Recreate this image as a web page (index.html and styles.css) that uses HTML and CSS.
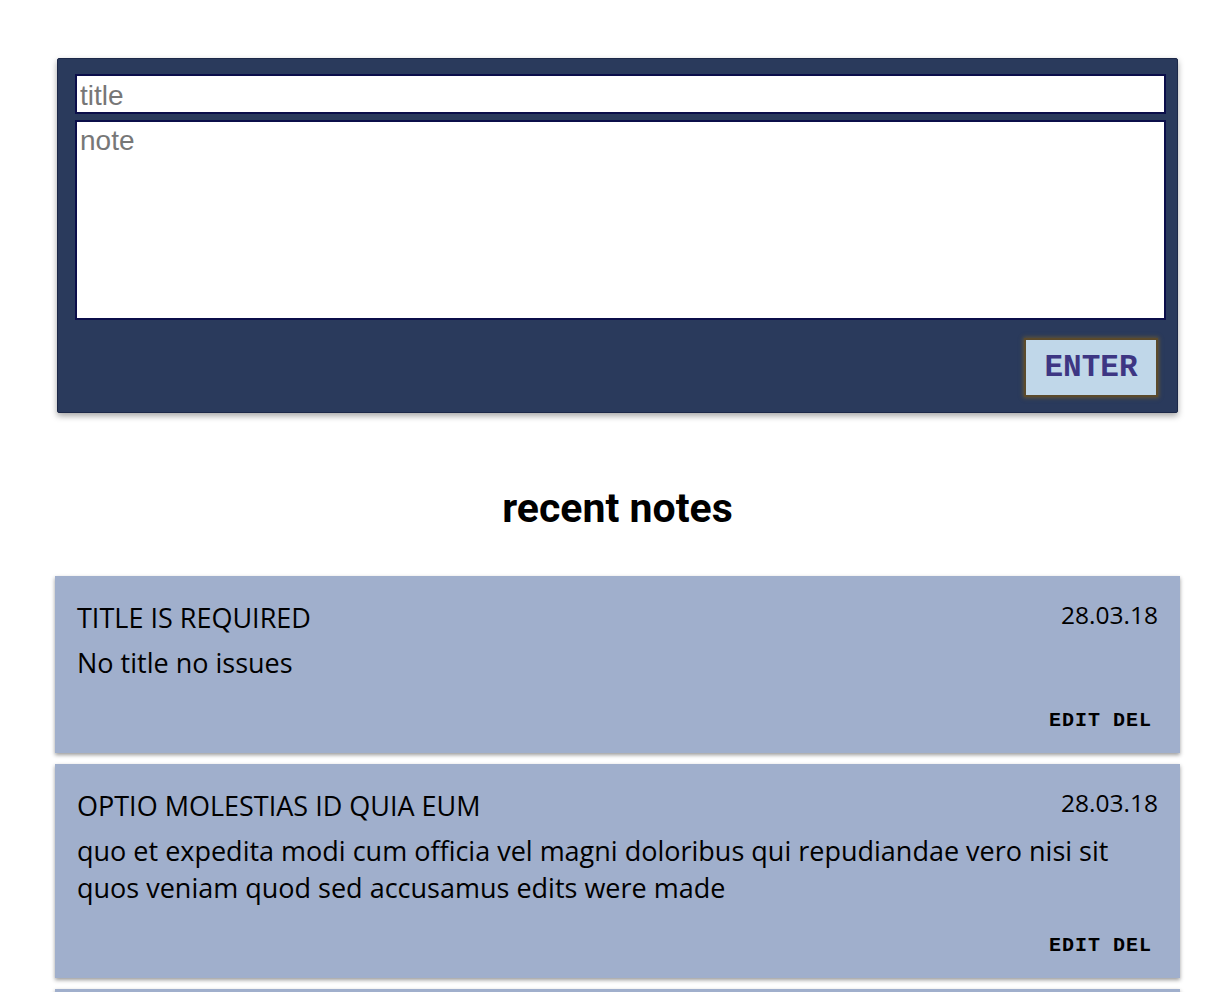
FILE: index.html
```html
<!DOCTYPE html>
<html>
<head>
<meta charset="utf-8">
<link rel="stylesheet" href="styles.css">
</head>
<body>
<main class="page">
  <form class="composer">
    <input class="field field-title" type="text" placeholder="title">
    <textarea class="field field-note" placeholder="note"></textarea>
    <div class="composer-actions">
      <button type="button" class="enter-btn">ENTER</button>
    </div>
  </form>

  <h2 class="section-title">recent notes</h2>

  <section class="notes">
    <article class="note">
      <header class="note-head">
        <h3 class="note-title">TITLE IS REQUIRED</h3>
        <span class="note-date">28.03.18</span>
      </header>
      <p class="note-body">No title no issues</p>
      <div class="note-actions"><span>EDIT</span><span>DEL</span></div>
    </article>
    <article class="note">
      <header class="note-head">
        <h3 class="note-title">OPTIO MOLESTIAS ID QUIA EUM</h3>
        <span class="note-date">28.03.18</span>
      </header>
      <p class="note-body">quo et expedita modi cum officia vel magni doloribus qui repudiandae vero nisi sit quos veniam quod sed accusamus edits were made</p>
      <div class="note-actions"><span>EDIT</span><span>DEL</span></div>
    </article>
    <article class="note">
      <header class="note-head">
        <h3 class="note-title">DOLOREM DOLORE EST IPSAM</h3>
        <span class="note-date">28.03.18</span>
      </header>
      <p class="note-body">dignissimos aperiam dolorem qui eum facilis quibusdam animi sint suscipit qui sint possimus cum</p>
      <div class="note-actions"><span>EDIT</span><span>DEL</span></div>
    </article>
  </section>
</main>
</body>
</html>
```

FILE: styles.css
```css
html, body {
  margin: 0;
  padding: 0;
  background: #ffffff;
}

.page {
  padding: 58px 45px 0 55px;
}

.composer {
  margin: 0 2px;
  background: #2a3a5c;
  border: 1px solid #1c2848;
  border-radius: 2px;
  padding: 15px 11px 15px 17px;
  display: flex;
  flex-direction: column;
  gap: 6px;
  box-shadow: 0 3px 6px rgba(0, 0, 0, 0.35);
}

.field {
  display: block;
  box-sizing: border-box;
  width: 100%;
  margin: 0;
  border: 2px solid #0b0e4a;
  background: #ffffff;
  font-family: "Liberation Sans", Arial, sans-serif;
  font-size: 28px;
  color: #333;
  padding: 3px 3px 0;
  outline: none;
}

.field::placeholder {
  color: #777777;
}

.field-title {
  height: 40px;
}

.field-note {
  height: 200px;
  resize: none;
  padding-top: 3px;
}

.composer-actions {
  display: flex;
  justify-content: flex-end;
  padding: 12px 8px 0 0;
}

.enter-btn {
  width: 134px;
  height: 59px;
  background: #c0d7e9;
  border: 2px solid #5b4a2c;
  box-shadow: 0 0 4px 1px rgba(120, 95, 40, 0.7);
  font-family: "Liberation Mono", "Courier New", monospace;
  font-weight: bold;
  font-size: 31px;
  color: #3d3683;
  padding: 0;
  cursor: pointer;
}

.section-title {
  margin: 69px 0 42px;
  text-align: center;
  font-family: Roboto, "Liberation Sans", sans-serif;
  font-weight: 700;
  font-size: 41px;
  color: #000;
  line-height: 52px;
}

.notes {
  display: flex;
  flex-direction: column;
  gap: 11px;
}

.note {
  background: #a0afcc;
  padding: 24px 22px 21px 22px;
  box-shadow: 0 2px 4px rgba(0, 0, 0, 0.4);
  font-family: "Open Sans", "Noto Sans", sans-serif;
  color: #000;
}

.note-head {
  display: flex;
  justify-content: space-between;
  align-items: baseline;
}

.note-title {
  margin: 0;
  font-weight: 400;
  font-size: 27px;
  line-height: 36px;
}

.note-date {
  font-size: 24.5px;
  line-height: 36px;
  position: relative;
  top: -4px;
}

.note-body {
  margin: 7px 0 0;
  font-size: 27px;
  line-height: 37px;
  padding-right: 20px;
}

.note-actions {
  display: flex;
  justify-content: flex-end;
  gap: 12px;
  margin-top: 29px;
  padding-right: 6px;
  font-family: "Liberation Mono", "Courier New", monospace;
  font-weight: bold;
  font-size: 20px;
  letter-spacing: 1px;
  line-height: 22px;
}
```
